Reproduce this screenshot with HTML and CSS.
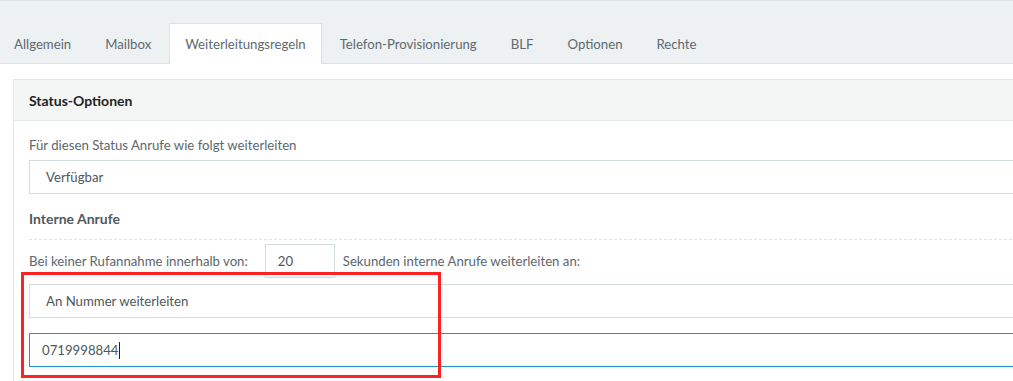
FILE: index.html
```html
<!DOCTYPE html>
<html lang="de">
<head>
    <meta charset="UTF-8">
    <meta name="viewport" content="width=device-width, initial-scale=1.0">
    <title>Weiterleitungsregeln</title>
    <link rel="stylesheet" href="styles.css">
</head>
<body>
    <div class="tabbar">
        <div class="tabs">
            <div class="tab">Allgemein</div>
            <div class="tab">Mailbox</div>
            <div class="tab active">Weiterleitungsregeln</div>
            <div class="tab">Telefon-Provisionierung</div>
            <div class="tab">BLF</div>
            <div class="tab">Optionen</div>
            <div class="tab">Rechte</div>
        </div>
    </div>

    <div class="panel">
        <div class="panel-heading">Status-Optionen</div>
        <div class="panel-body">
            <div class="label">Für diesen Status Anrufe wie folgt weiterleiten</div>
            <div class="select">Verfügbar</div>

            <div class="section-title">Interne Anrufe</div>

            <div class="inline-row">
                <span class="label">Bei keiner Rufannahme innerhalb von:</span>
                <div class="small-input">20</div>
                <span class="label">Sekunden interne Anrufe weiterleiten an:</span>
            </div>
            <div class="select select-tight">An Nummer weiterleiten</div>
            <div class="text-input focused">0719998844<span class="caret"></span></div>

            <div class="highlight"></div>
        </div>
    </div>
</body>
</html>
```

FILE: styles.css
```css
body {
    margin: 0;
    background-color: #fff;
    font-family: Lato, "Open Sans", sans-serif;
    font-size: 13.2px;
    color: #5c676e;
    overflow: hidden;
}
.tabbar {
    background-color: #edf1f2;
    border-top: 1px solid #dbe2e4;
    border-bottom: 1px solid #dbe2e4;
    height: 62px;
    display: flex;
    align-items: flex-end;
}
.tabs {
    display: flex;
    margin-left: -2px;
    margin-bottom: -1px;
}
.tab {
    height: 39px;
    padding: 0 15px;
    margin-right: 2px;
    border: 1px solid transparent;
    border-bottom: none;
    display: flex;
    align-items: center;
    color: #5e6a71;
    white-space: nowrap;
}
.tab.active {
    background-color: #fff;
    border-color: #dbe2e4;
    height: 40px;
}
.panel {
    margin: 15px -40px 0 13px;
    border: 1px solid #e1e6e8;
    border-bottom: none;
}
.panel-heading {
    height: 40px;
    padding: 0 15px;
    display: flex;
    align-items: center;
    background-color: #f4f6f6;
    border-bottom: 1px solid #e6eaeb;
    font-weight: bold;
    font-size: 14px;
    color: #1f2326;
}
.panel-body {
    position: relative;
    padding: 14px 15px 20px 15px;
}
.label {
    line-height: 20px;
    color: #5c676e;
}
.select {
    margin-top: 5px;
    height: 32px;
    border: 1px solid #d3dcdf;
    padding-left: 16px;
    display: flex;
    align-items: center;
    color: #4d575d;
}
.section-title {
    margin-top: 15px;
    padding-bottom: 10px;
    line-height: 20px;
    border-bottom: 1px dashed #dfe3e4;
    font-weight: bold;
    font-size: 14px;
    color: #4f5a60;
}
.inline-row {
    margin-top: 4px;
    display: flex;
    align-items: center;
}
.small-input {
    width: 56px;
    height: 32px;
    margin: 0 8px 0 17px;
    border: 1px solid #d3dcdf;
    padding-left: 12px;
    display: flex;
    align-items: center;
    color: #4d575d;
}
.select-tight {
    margin-top: 6px;
}
.text-input {
    margin-top: 15px;
    height: 32px;
    border: 1px solid #d3dcdf;
    padding-left: 12px;
    display: flex;
    align-items: center;
    color: #4d575d;
}
.text-input.focused {
    border-color: #1b95c9;
}
.caret {
    width: 1px;
    height: 17px;
    background-color: #222;
}
.highlight {
    position: absolute;
    left: 7px;
    top: 151px;
    width: 414px;
    height: 100px;
    border: 3px solid #ff2222;
}
```
